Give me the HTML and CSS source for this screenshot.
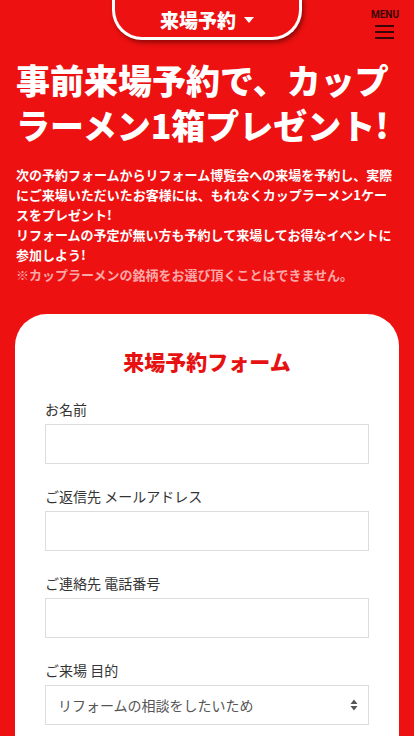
FILE: index.html
```html
<!DOCTYPE html>
<html lang="ja">
<head>
<meta charset="utf-8">
<meta name="viewport" content="width=device-width, initial-scale=1">
<title>来場予約</title>
<link rel="stylesheet" href="styles.css">
</head>
<body>
<header class="header">
  <div class="header-side"></div>
  <a class="tab" href="#form">来場予約<span class="tab-caret"></span></a>
  <div class="header-side header-right">
    <button class="menu" type="button">
      <span class="menu-label">MENU</span>
      <span class="menu-bar"></span>
      <span class="menu-bar"></span>
      <span class="menu-bar"></span>
    </button>
  </div>
</header>
<main class="main">
  <h1 class="headline">事前来場予約で、カップラーメン1箱プレゼント!</h1>
  <p class="lead">次の予約フォームからリフォーム博覧会への来場を予約し、実際にご来場いただいたお客様には、もれなくカップラーメン1ケースをプレゼント!<br>リフォームの予定が無い方も予約して来場してお得なイベントに参加しよう!<br><span class="note">※カップラーメンの銘柄をお選び頂くことはできません。</span></p>
  <section class="card" id="form">
    <h2 class="card-title">来場予約フォーム</h2>
    <div class="field">
      <label class="label">お名前</label>
      <input class="input" type="text">
    </div>
    <div class="field">
      <label class="label">ご返信先 メールアドレス</label>
      <input class="input" type="email">
    </div>
    <div class="field">
      <label class="label">ご連絡先 電話番号</label>
      <input class="input" type="tel">
    </div>
    <div class="field">
      <label class="label">ご来場 目的</label>
      <div class="select-wrap">
        <select class="input select">
          <option>リフォームの相談をしたいため</option>
        </select>
        <svg class="select-arrow" width="8" height="12" viewBox="0 0 8 12"><path d="M4 0.5L7.5 5H0.5Z M4 11.5L0.5 7H7.5Z" fill="#555"/></svg>
      </div>
    </div>
  </section>
</main>
</body>
</html>
```
FILE: styles.css
```css
* { box-sizing: border-box; }
html, body { margin: 0; padding: 0; }
body {
  background: #ed1111;
  font-family: "Noto Sans CJK JP", "Noto Sans", sans-serif;
  color: #fff;
}
.header {
  display: grid;
  grid-template-columns: 1fr auto 1fr;
  align-items: start;
  height: 43px;
}
.header-right {
  display: flex;
  justify-content: flex-end;
  padding-right: 15px;
}
.tab {
  display: flex;
  align-items: center;
  justify-content: center;
  gap: 8px;
  width: 190px;
  height: 43px;
  margin-top: -3px;
  padding-top: 4px;
  border: 3px solid #fff;
  border-top: none;
  border-radius: 0 0 30px 30px;
  background: #ed1111;
  box-shadow: 2px 3px 4px rgba(80, 0, 0, 0.55);
  color: #fff;
  font-size: 19px;
  font-weight: 900;
  text-decoration: none;
  line-height: 1;
}
.tab-caret {
  width: 0;
  height: 0;
  border-left: 5px solid transparent;
  border-right: 5px solid transparent;
  border-top: 6px solid #fff;
  margin-top: 2px;
}
.menu {
  display: flex;
  flex-direction: column;
  align-items: center;
  gap: 4px;
  padding: 10px 0 0;
  background: none;
  border: none;
  cursor: pointer;
}
.menu-label {
  font-family: "Roboto", "Liberation Sans", sans-serif;
  font-size: 10px;
  font-weight: 700;
  color: #3a0606;
  line-height: 10px;
  margin-bottom: 1px;
}
.menu-bar {
  display: block;
  width: 19px;
  height: 2px;
  background: #3a0606;
}
.main {
  padding: 14px 16px 0;
}
.headline {
  margin: 0;
  font-size: 34px;
  line-height: 45px;
  font-weight: 900;
}
.lead {
  margin: 18px 0 0;
  font-size: 13px;
  line-height: 20px;
  font-weight: 700;
}
.note {
  color: #fba8a8;
}
.card {
  margin: 29px -1px 0;
  background: #fff;
  border-radius: 32px 32px 0 0;
  padding: 32px 30px 20px;
}
.card-title {
  margin: 0 0 23px;
  text-align: center;
  color: #e61212;
  font-size: 21px;
  line-height: 30px;
  font-weight: 900;
}
.field {
  margin-bottom: 22px;
}
.label {
  display: block;
  color: #333;
  font-size: 14px;
  line-height: 20px;
  margin-bottom: 5px;
}
.input {
  display: block;
  width: 100%;
  height: 40px;
  border: 1px solid #dcdcdc;
  background: #fff;
  font-family: inherit;
  font-size: 14px;
  color: #555;
  padding: 0 12px;
  border-radius: 0;
}
.select-wrap {
  position: relative;
}
.select {
  appearance: none;
  -webkit-appearance: none;
  outline: none;
}
.select-arrow {
  position: absolute;
  right: 11px;
  top: 14px;
  pointer-events: none;
}
```
